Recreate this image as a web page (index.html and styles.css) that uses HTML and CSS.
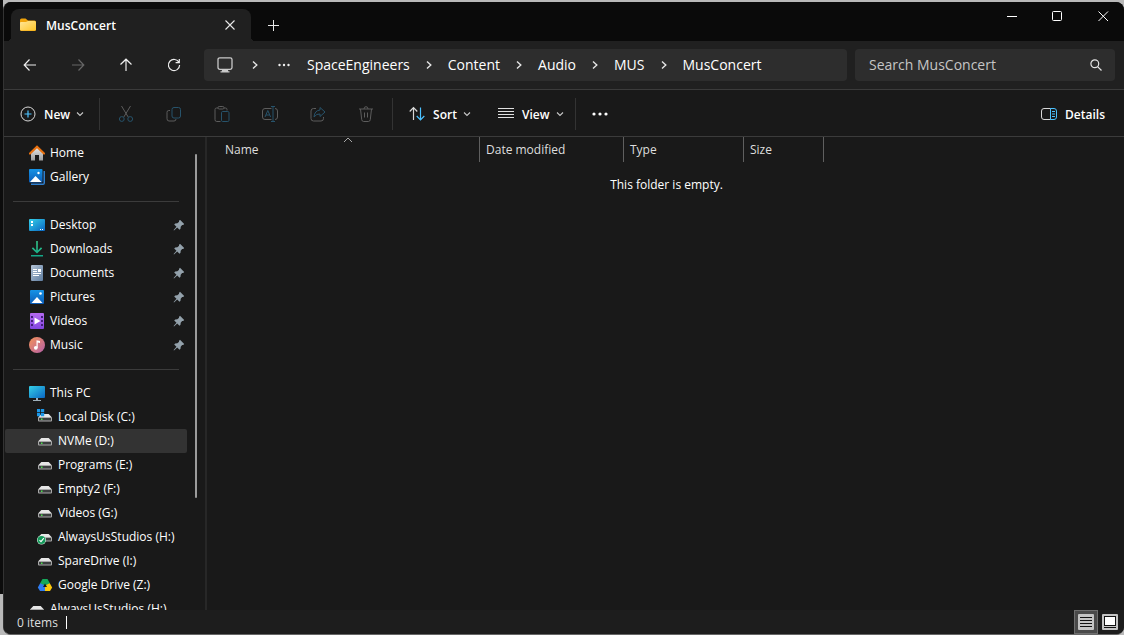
FILE: index.html
```html
<!DOCTYPE html>
<html lang="en">
<head>
    <meta charset="UTF-8">
    <title>MusConcert</title>
    <link rel="stylesheet" href="styles.css">
</head>
<body>
<!-- shared icons -->
<svg class="defs" aria-hidden="true">
    <defs>
        <linearGradient id="gBlue" x1="0" y1="0" x2="1" y2="1">
            <stop offset="0" stop-color="#35d0e8"/><stop offset="1" stop-color="#0a66c2"/>
        </linearGradient>
        <linearGradient id="gPic" x1="0" y1="0" x2="0" y2="1">
            <stop offset="0" stop-color="#1593e6"/><stop offset="1" stop-color="#0b5cb8"/>
        </linearGradient>
        <linearGradient id="gFolder" x1="0" y1="0" x2="1" y2="1">
            <stop offset="0" stop-color="#ffe699"/><stop offset="1" stop-color="#ffc629"/>
        </linearGradient>
        <linearGradient id="gGreen" x1="0" y1="0" x2="0" y2="1">
            <stop offset="0" stop-color="#35c98a"/><stop offset="1" stop-color="#12a588"/>
        </linearGradient>
        <linearGradient id="gDoc" x1="0" y1="0" x2="1" y2="1">
            <stop offset="0" stop-color="#b3c3d6"/><stop offset="1" stop-color="#5f7d9f"/>
        </linearGradient>
        <linearGradient id="gVideo" x1="0" y1="0" x2="0" y2="1">
            <stop offset="0" stop-color="#b56af2"/><stop offset="1" stop-color="#8246e0"/>
        </linearGradient>
        <linearGradient id="gMusic" x1="0" y1="0" x2="1" y2="1">
            <stop offset="0" stop-color="#f59358"/><stop offset="1" stop-color="#b45fa8"/>
        </linearGradient>
        <linearGradient id="gHouse" x1="0" y1="0" x2="0" y2="1">
            <stop offset="0" stop-color="#e8e8e8"/><stop offset="1" stop-color="#9c9c9c"/>
        </linearGradient>
    </defs>
    <symbol id="chevron" viewBox="0 0 10 10"><path d="M3 1.5 6.8 5 3 8.5" fill="none" stroke="#e4e4e4" stroke-width="1.4"/></symbol>
    <symbol id="down" viewBox="0 0 8 8"><path d="M1 2.5 4 5.5 7 2.5" fill="none" stroke="#c8c8c8" stroke-width="1.1"/></symbol>
    <symbol id="pin" viewBox="0 0 12 12"><path d="M7 .8 11.2 5l-1 .9-1.1.2-1.4 1.6-.2 2.1-1 .9-2.3-2.2L1 11.4l-.4-.4L3.5 7.8 1.2 5.5l1-1 2.1-.2 1.6-1.4.2-1.1z" fill="#93a1ab"/></symbol>
    <symbol id="drive" viewBox="0 0 16 16">
        <path d="M4.3 5h7.4L15 8.500H1z" fill="#e6e6e6"/>
        <rect x="1" y="8" width="14" height="4.500" rx="1" fill="#a9a9a9"/>
        <rect x="2" y="9" width="12" height="2.500" fill="#3d3f40"/>
        <rect x="4" y="9.500" width="1.500" height="1.500" fill="#4be04b"/>
    </symbol>
</svg>

<div class="window">
    <header class="titlebar">
        <div class="tab">
            <svg width="16" height="16" viewBox="0 0 16 16">
                <path d="M0 3Q0 1.500 1.500 1.500h4L8 3.500h6.500Q16 3.500 16 5v7.500q0 1.500-1.500 1.500h-13Q0 14 0 12.500z" fill="#f0a30a"/>
                <path d="M0 6Q0 5 1 5h5l2-1h6.500Q16 4 16 5.500v7q0 1-1.500 1h-13Q0 13.500 0 12.500z" fill="url(#gFolder)"/>
            </svg>
            <span class="tab-title">MusConcert</span>
            <button class="tab-close" aria-label="Close tab"><svg width="10" height="10" viewBox="0 0 10 10"><path d="M.5.5l9 9M9.500.5l-9 9" stroke="#e8e8e8" stroke-width="1.100"/></svg></button>
        </div>
        <button class="new-tab" aria-label="New tab"><svg width="12" height="12" viewBox="0 0 12 12"><path d="M6.500 1v11M1 6.500h11" stroke="#e8e8e8"/></svg></button>
        <div class="controls">
            <button aria-label="Minimize"><svg width="11" height="11" viewBox="0 0 11 11"><path d="M1 5.500h10" stroke="#fff"/></svg></button>
            <button aria-label="Maximize"><svg width="11" height="11" viewBox="0 0 11 11"><rect x=".5" y=".5" width="9" height="9" rx="1" fill="none" stroke="#fff"/></svg></button>
            <button aria-label="Close"><svg width="11" height="11" viewBox="0 0 11 11"><path d="M.5.500l9.500 9.500M10 .5.500 10" stroke="#fff"/></svg></button>
        </div>
    </header>

    <div class="navbar">
        <div class="nav-buttons">
            <button aria-label="Back"><svg width="14" height="14" viewBox="0 0 14 14"><path d="M13 7H1.500M6.500 1.500 1.200 7l5.300 5.500"/></svg></button>
            <button aria-label="Forward" disabled><svg width="14" height="14" viewBox="0 0 14 14"><path d="M1 7h11.500M7.500 1.500 12.800 7l-5.300 5.500"/></svg></button>
            <button aria-label="Up"><svg width="14" height="14" viewBox="0 0 14 14"><path d="M7 13V1.500M1.500 6.500 7 1.200l5.500 5.300"/></svg></button>
            <button aria-label="Refresh"><svg width="14" height="14" viewBox="0 0 14 14"><path d="M12 4.500A5.600 5.600 0 1 0 12.600 7M12.300 1v3.700H8.600"/></svg></button>
        </div>
        <nav class="address" aria-label="Path">
            <svg class="monitor" width="16" height="16" viewBox="0 0 16 16" fill="none" stroke="#c9c9c9"><rect x="1" y=".8" width="14" height="11.500" rx="1.800" stroke-width="1.300"/><path d="M5.500 12.500v2M10.500 12.500v2M3.500 14.800h9M6 13.600h4" stroke-width="1.200"/></svg>
            <svg class="chev" width="10" height="10"><use href="#chevron"/></svg>
            <button class="dots" aria-label="More folders"><svg width="12" height="4" viewBox="0 0 12 4" fill="#eee"><circle cx="1.500" cy="2" r="1.200"/><circle cx="6" cy="2" r="1.200"/><circle cx="10.500" cy="2" r="1.200"/></svg></button>
            <a href="#">SpaceEngineers</a>
            <svg class="chev" width="10" height="10"><use href="#chevron"/></svg>
            <a href="#">Content</a>
            <svg class="chev" width="10" height="10"><use href="#chevron"/></svg>
            <a href="#">Audio</a>
            <svg class="chev" width="10" height="10"><use href="#chevron"/></svg>
            <a href="#">MUS</a>
            <svg class="chev" width="10" height="10"><use href="#chevron"/></svg>
            <a href="#">MusConcert</a>
        </nav>
        <label class="search">
            <input type="text" placeholder="Search MusConcert" aria-label="Search MusConcert">
            <svg width="12" height="12" viewBox="0 0 12 12" fill="none" stroke="#e4e4e4" stroke-width="1.200"><circle cx="4.800" cy="4.800" r="3.900"/><path d="M7.600 7.600 11.500 11.500"/></svg>
        </label>
    </div>

    <div class="commands">
        <button class="cmd cmd-new">
            <svg width="16" height="16" viewBox="0 0 16 16" fill="none"><circle cx="8" cy="8" r="7" stroke="#d8d8d8"/><path d="M8 4.500v7M4.500 8h7" stroke="#4cc2ff" stroke-width="1.200"/></svg>
            New
            <svg width="8" height="8"><use href="#down"/></svg>
        </button>
        <span class="divider"></span>
        <div class="tools">
            <button disabled aria-label="Cut"><svg width="16" height="16" viewBox="0 0 16 16"><path d="M3.500 0 10.200 11M12.500 0 5.800 11" class="g"/><circle cx="3.800" cy="13" r="2.400" class="b"/><circle cx="12.200" cy="13" r="2.400" class="b"/></svg></button>
            <button disabled aria-label="Copy"><svg width="16" height="16" viewBox="0 0 16 16"><path d="M4 4.500H2.800Q1 4.500 1 6.300v6.400Q1 15 3 15h5Q10 15 10 13" class="g"/><rect x="6" y="1.500" width="8.500" height="10.500" rx="2" class="b"/></svg></button>
            <button disabled aria-label="Paste"><svg width="16" height="16" viewBox="0 0 16 16"><path d="M6.500 15.500H2.800Q1 15.500 1 13.700V3.500Q1 2 2.500 2H4m6 0h1.500Q13 2 13 3.500V4.500" class="g"/><rect x="4" y=".5" width="6" height="2.500" rx="1.200" class="g"/><rect x="7.500" y="5.500" width="7.500" height="10" rx="1.200" class="b"/></svg></button>
            <button disabled aria-label="Rename"><svg width="16" height="16" viewBox="0 0 16 16"><path d="M9.500 2.500H3Q.5 2.500.500 5v6q0 2.500 2.500 2.500h6.500M13 2.500q2.500 0 2.500 2.500v6q0 2.500-2.500 2.500" class="g"/><path d="M3 11 5.800 4.500 8.600 11M4 9h3.600M11 .5v15M9 .5h4M9 15.500h4" class="b"/></svg></button>
            <button disabled aria-label="Share"><svg width="16" height="16" viewBox="0 0 16 16"><path d="M6 2.500H3.500Q1 2.500 1 5v7.500Q1 15 3.500 15H11q2.500 0 2.500-2.500V11" class="g"/><path d="M10 1.500 15 6l-5 4.500V8Q6.500 7.500 4 11 4.500 4.500 10 4z" class="b"/></svg></button>
            <button disabled aria-label="Delete"><svg width="16" height="16" viewBox="0 0 16 16"><path d="M1 3h14M2.500 3l1.200 10.500q.2 2 2 2h4.600q1.800 0 2-2L13.500 3M6 3Q6 .7 8 .7T10 3M6.500 6.500v5M9.500 6.500v5" class="g"/></svg></button>
        </div>
        <span class="divider"></span>
        <button class="cmd">
            <svg width="16" height="16" viewBox="0 0 16 16" fill="none" stroke-width="1.200"><path d="M4.500 14V1.500M.7 5.500 4.500 1.500 8.300 5.500" stroke="#d8d8d8"/><path d="M11.500 1.500V14M7.700 10l3.800 4 3.800-4" stroke="#4cc2ff"/></svg>
            Sort
            <svg width="8" height="8"><use href="#down"/></svg>
        </button>
        <button class="cmd">
            <svg width="16" height="16" viewBox="0 0 16 16"><path d="M0 2.500h16M0 5.500h16M0 8.500h16M0 11.500h16" stroke="#e0e0e0"/></svg>
            View
            <svg width="8" height="8"><use href="#down"/></svg>
        </button>
        <span class="divider"></span>
        <button class="more" aria-label="See more"><svg width="16" height="4" viewBox="0 0 16 4" fill="#fff"><circle cx="2" cy="2" r="1.600"/><circle cx="8" cy="2" r="1.600"/><circle cx="14" cy="2" r="1.600"/></svg></button>
        <button class="cmd cmd-details">
            <svg width="16" height="16" viewBox="0 0 16 16" fill="none"><path d="M9.500 2.500H3Q.5 2.500.500 5v6q0 2.500 2.500 2.500h6.500" stroke="#d8d8d8"/><path d="M9.500 2.500H13q2.500 0 2.500 2.500v6q0 2.500-2.500 2.500H9.500zM11 5.500h3M11 8h3M11 10.500h3" stroke="#4cc2ff"/></svg>
            Details
        </button>
    </div>

    <div class="content">
        <aside class="sidebar">
            <ul class="tree">
                <li><a href="#">
                    <svg width="16" height="16" viewBox="0 0 16 16"><path d="M2 7 8 2l6 5v8.500H10V10H6v5.500H2z" fill="url(#gHouse)"/><path d="M1 8.500 8 1.800l7 6.700" fill="none" stroke="#e8700f" stroke-width="2.200" stroke-linecap="round"/></svg>
                    <span>Home</span></a></li>
                <li><a href="#">
                    <svg width="16" height="16" viewBox="0 0 16 16"><path d="M2 14.500h12.500V2H16v12q0 2-2 2H2z" fill="#2d7fd0"/><rect width="13.500" height="13.500" rx="1" fill="url(#gPic)"/><path d="M1 13 6.500 7l6 6z" fill="#fff"/><circle cx="9.500" cy="4" r="1.200" fill="#fff"/></svg>
                    <span>Gallery</span></a></li>
                <li class="line"></li>
                <li><a href="#">
                    <svg width="16" height="16" viewBox="0 0 16 16"><rect y="2" width="16" height="12" rx="1" fill="url(#gBlue)"/><path d="M2 4h2v2H2zM2 7h2v2H2zM11 12h1v1h-1zM13 12h1v1h-1z" fill="#fff"/></svg>
                    <span>Desktop</span><svg class="pin" width="12" height="12"><use href="#pin"/></svg></a></li>
                <li><a href="#">
                    <svg width="16" height="16" viewBox="0 0 16 16"><path d="M7.200 0h1.600v9.500L12 6.300l1.200 1.200L8 12.500 2.800 7.500 4 6.300l3.200 3.200zM2 14h12v1.600H2z" fill="url(#gGreen)"/></svg>
                    <span>Downloads</span><svg class="pin" width="12" height="12"><use href="#pin"/></svg></a></li>
                <li><a href="#">
                    <svg width="16" height="16" viewBox="0 0 16 16"><rect x="2" width="12" height="16" rx="1" fill="url(#gDoc)"/><path d="M4 4.500h4M4 6.500h4M4 8.500h8M4 10.500h6" stroke="#fff"/><rect x="9" y="4" width="3" height="3" fill="#fff"/></svg>
                    <span>Documents</span><svg class="pin" width="12" height="12"><use href="#pin"/></svg></a></li>
                <li><a href="#">
                    <svg width="16" height="16" viewBox="0 0 16 16"><rect x="1" y="1" width="14" height="14" rx="1" fill="url(#gPic)"/><path d="M2.500 14 8 8l5.500 6z" fill="#fff"/><circle cx="11.500" cy="4.500" r="1.300" fill="#fff"/></svg>
                    <span>Pictures</span><svg class="pin" width="12" height="12"><use href="#pin"/></svg></a></li>
                <li><a href="#">
                    <svg width="16" height="16" viewBox="0 0 16 16"><rect x="1" width="14" height="16" rx="1" fill="url(#gVideo)"/><path d="M2 3h2v2H2zM2 7h2v2H2zM2 11h2v2H2zM12 3h2v2h-2zM12 7h2v2h-2zM12 11h2v2h-2z" fill="#42207c"/><path d="M5.500 4.500 11.500 8l-6 3.500z" fill="#fff"/></svg>
                    <span>Videos</span><svg class="pin" width="12" height="12"><use href="#pin"/></svg></a></li>
                <li><a href="#">
                    <svg width="16" height="16" viewBox="0 0 16 16"><circle cx="8" cy="8" r="8" fill="url(#gMusic)"/><circle cx="6.800" cy="10.800" r="1.900" fill="#fff"/><path d="M7.500 3.200 11 4v2L8.700 5.500v5.300H7.500z" fill="#fff"/></svg>
                    <span>Music</span><svg class="pin" width="12" height="12"><use href="#pin"/></svg></a></li>
                <li class="line"></li>
                <li><a href="#">
                    <svg width="16" height="16" viewBox="0 0 16 16"><rect y="1" width="16" height="12" rx="1" fill="url(#gBlue)"/><path d="M7 13h2v2h3v1H4v-1h3z" fill="#9fb0bb"/></svg>
                    <span>This PC</span></a></li>
                <li class="sub"><a href="#">
                    <svg width="16" height="16" viewBox="0 0 16 16"><use href="#drive"/><path d="M0 0h3.200v3.200H0zM4 0h3.200v3.200H4zM0 4h3.200v3.200H0zM4 4h3.200v3.200H4z" fill="#1b97e8"/></svg>
                    <span>Local Disk (C:)</span></a></li>
                <li class="sub selected"><a href="#" aria-current="true">
                    <svg width="16" height="16"><use href="#drive"/></svg>
                    <span>NVMe (D:)</span></a></li>
                <li class="sub"><a href="#">
                    <svg width="16" height="16"><use href="#drive"/></svg>
                    <span>Programs (E:)</span></a></li>
                <li class="sub"><a href="#">
                    <svg width="16" height="16"><use href="#drive"/></svg>
                    <span>Empty2 (F:)</span></a></li>
                <li class="sub"><a href="#">
                    <svg width="16" height="16"><use href="#drive"/></svg>
                    <span>Videos (G:)</span></a></li>
                <li class="sub"><a href="#">
                    <svg width="16" height="16" viewBox="0 0 16 16"><use href="#drive"/><circle cx="4.500" cy="11" r="4.500" fill="#d9f2e3"/><circle cx="4.500" cy="11" r="3.900" fill="#14995a"/><path d="M2.500 11.200 4 12.700 6.800 9.200" fill="none" stroke="#fff" stroke-width="1.100"/></svg>
                    <span>AlwaysUsStudios (H:)</span></a></li>
                <li class="sub"><a href="#">
                    <svg width="16" height="16"><use href="#drive"/></svg>
                    <span>SpareDrive (I:)</span></a></li>
                <li class="sub"><a href="#">
                    <svg width="16" height="16" viewBox="0 0 16 16"><path d="M5.500 2h5L13 6.500 8 9.500 3 6.500z" fill="#15a85a"/><path d="M3.200 6.200 8 8.500 4.500 14H3L.8 10.500z" fill="#2f7cf0"/><path d="M12.800 6.200 15.200 10.500 13 14H8V8.500z" fill="#fbc80c"/><path d="M3 14 6 9h2v5z" fill="#2f7cf0"/><path d="M8 6.500 10 10H6z" fill="#191919"/></svg>
                    <span>Google Drive (Z:)</span></a></li>
                <li><a href="#">
                    <svg width="16" height="16"><use href="#drive"/></svg>
                    <span>AlwaysUsStudios (H:)</span></a></li>
            </ul>
            <div class="scroll"><div class="thumb"></div></div>
        </aside>
        <main class="files">
            <table>
                <thead>
                <tr>
                    <th class="col-name">Name<svg class="sorted" width="10" height="6" viewBox="0 0 10 6"><path d="M1 5 5 1l4 4" fill="none" stroke="#a8a8a8"/></svg></th>
                    <th class="col-date">Date modified</th>
                    <th class="col-type">Type</th>
                    <th class="col-size">Size</th>
                </tr>
                </thead>
            </table>
            <p class="empty">This folder is empty.</p>
        </main>
    </div>

    <footer class="status">
        <span class="count">0 items</span>
        <div class="views">
            <button class="on" aria-label="Details view"><svg width="16" height="16" viewBox="0 0 16 16"><rect width="16" height="16" rx="1" fill="#c4c4c4"/><path d="M2 3.500h12M2 6.500h12M2 9.500h12M2 12.500h12" stroke="#111"/></svg></button>
            <button aria-label="Large icons view"><svg width="16" height="16" viewBox="0 0 16 16"><rect width="16" height="16" rx="1" fill="#c4c4c4"/><rect x="2.500" y="2.500" width="11" height="9" fill="#fff" stroke="#111"/><path d="M2 13.500h12" stroke="#111"/></svg></button>
        </div>
    </footer>
</div>
</body>
</html>
```
FILE: styles.css
```css
* {
    margin: 0;
    padding: 0;
    box-sizing: border-box;
}

body {
    height: 100vh;
    padding: 2px 0 0 3px;
    overflow: hidden;
    /* dark strip on the left, light desktop behind the rest */
    background: linear-gradient(#0c0c0c, #0c0c0c) 0 0 / 3px calc(100% - 41px) no-repeat #b9b9b9;
    font-family: "Open Sans", "Noto Sans", sans-serif;
    font-size: 12px;
    color: #fff;
}

button {
    display: flex;
    align-items: center;
    justify-content: center;
    border: 0;
    background: none;
    font: inherit;
    color: inherit;
}

a {
    color: inherit;
    text-decoration: none;
}

svg {
    display: block;
    flex: none;
}

.defs {
    position: absolute;
    width: 0;
    height: 0;
}

.window {
    display: flex;
    flex-direction: column;
    height: 100%;
    overflow: hidden;
    border-left: 1px solid #333;
    border-bottom: 1px solid #666;
    border-radius: 8px;
    background-color: #191919;
}

/* title bar */
.titlebar {
    display: flex;
    height: 39px;
    background-color: #0a0a0a;
}

.tab {
    position: relative;
    display: flex;
    align-items: center;
    width: 240px;
    height: 32px;
    margin: 7px 0 0 7px;
    padding: 0 9px;
    border-radius: 8px 8px 0 0;
    background-color: #202020;
}

.tab::before,
.tab::after {
    content: "";
    position: absolute;
    bottom: 0;
    width: 4px;
    height: 4px;
}

.tab::before {
    left: -4px;
    background: radial-gradient(circle at 0 0, #0a0a0a 4px, #202020 4px);
}

.tab::after {
    right: -4px;
    background: radial-gradient(circle at 100% 0, #0a0a0a 4px, #202020 4px);
}

.tab-title {
    flex: 1;
    padding-left: 10px;
    font-weight: 600;
}

.tab-close {
    width: 24px;
    height: 24px;
}

.new-tab {
    width: 32px;
    height: 32px;
    margin: 7px 0 0 6px;
}

.controls {
    display: flex;
    gap: 4px;
    margin-left: auto;
}

.controls button {
    width: 42px;
    height: 28px;
}

/* back, forward, path, search */
.navbar {
    display: flex;
    align-items: center;
    height: 49px;
    padding-right: 9px;
    border-bottom: 1px solid #3b3b3b;
    background-color: #202020;
}

.nav-buttons {
    display: flex;
    padding: 0 6px 0 2px;
}

.nav-buttons button {
    width: 48px;
    height: 32px;
}

.nav-buttons svg {
    fill: none;
    stroke: #ececec;
    stroke-width: 1.2;
}

.nav-buttons button:disabled svg {
    stroke: #666;
}

.address {
    display: flex;
    align-items: center;
    flex: 1;
    height: 32px;
    padding-left: 13px;
    border-radius: 4px;
    background-color: #2d2d2d;
    font-size: 14px;
}

.address a {
    padding-bottom: 2px;
}

.address .chev {
    margin: 0 14px;
}

.address .monitor + .chev {
    margin: 0 18px 0 17px;
}

.dots {
    margin-right: 17px;
}

.search {
    display: flex;
    align-items: center;
    width: 260px;
    height: 32px;
    margin-left: 8px;
    padding: 0 13px 0 14px;
    border-radius: 4px;
    background-color: #2d2d2d;
}

.search input {
    flex: 1;
    min-width: 0;
    padding-bottom: 2px;
    border: 0;
    outline: 0;
    background: none;
    font: inherit;
    font-size: 14px;
    color: #fff;
}

.search input::placeholder {
    color: #c5c5c5;
    opacity: 1;
}

/* command bar */
.commands {
    display: flex;
    align-items: center;
    height: 47px;
    padding-top: 2px;
    border-bottom: 1px solid #3b3b3b;
    font-weight: 600;
}

.cmd {
    gap: 8px;
    height: 32px;
    padding: 0 11px 0 16px;
}

.cmd svg:last-child {
    margin-left: -2px;
}

.cmd-new {
    padding-right: 15px;
}

.divider {
    width: 1px;
    height: 32px;
    background-color: #333;
}

.tools {
    display: flex;
    padding: 0 2px;
}

.tools button {
    width: 48px;
    height: 32px;
}

.tools .g {
    fill: none;
    stroke: #5d5d5d;
}

.tools .b {
    fill: none;
    stroke: #27536b;
}

.more {
    width: 48px;
    height: 32px;
}

.cmd-details {
    margin-left: auto;
    padding-right: 19px;
}

/* folder tree */
.content {
    display: flex;
    flex: 1;
    min-height: 0;
}

.sidebar {
    display: flex;
    width: 203px;
    overflow: hidden;
    border-right: 2px solid #272727;
}

.tree {
    flex: 1;
    padding: 4px 0 0 1px;
    list-style: none;
}

.tree li a {
    display: flex;
    align-items: center;
    height: 24px;
    padding: 0 2px 0 24px;
}

.tree li span {
    flex: 1;
    padding: 0 0 2px 5px;
    white-space: nowrap;
}

.tree li.sub a {
    padding-left: 32px;
}

.tree li.selected {
    border-radius: 2px;
    background-color: #333;
}

.tree li.line {
    height: 1px;
    margin: 12px 8px 11px 8px;
    background-color: #3b3b3b;
}

.scroll {
    width: 18px;
    padding: 17px 8px 0 8px;
}

.thumb {
    height: 344px;
    border-radius: 1px;
    background-color: #9b9b9b;
}

/* file list */
.files {
    flex: 1;
}

table {
    border-collapse: separate;
    border-spacing: 0;
    table-layout: fixed;
    width: 617px;
}

th {
    position: relative;
    height: 25px;
    padding-left: 6px;
    border-right: 1px solid #5f5f5f;
    text-align: left;
    font-weight: 400;
    color: #dedede;
}

.col-name {
    width: 273px;
    padding-left: 18px;
}

.col-date {
    width: 144px;
}

.col-type {
    width: 120px;
}

.col-size {
    width: 80px;
}

.sorted {
    position: absolute;
    top: 0;
    left: 50%;
}

.empty {
    padding: 14px 0 0 2px;
    line-height: 18px;
    text-align: center;
}

/* status bar */
.status {
    display: flex;
    align-items: center;
    justify-content: space-between;
    height: 24px;
    padding: 0 2px 0 13px;
    background-color: #1d1d1d;
}

.count {
    padding-right: 8px;
    border-right: 1px solid #fff;
    line-height: 13px;
    color: #dedede;
}

.views {
    display: flex;
}

.views button {
    width: 24px;
    height: 24px;
}

.views button.on {
    border: 1px solid #6e6e6e;
    background-color: #4a4a4a;
}
```
